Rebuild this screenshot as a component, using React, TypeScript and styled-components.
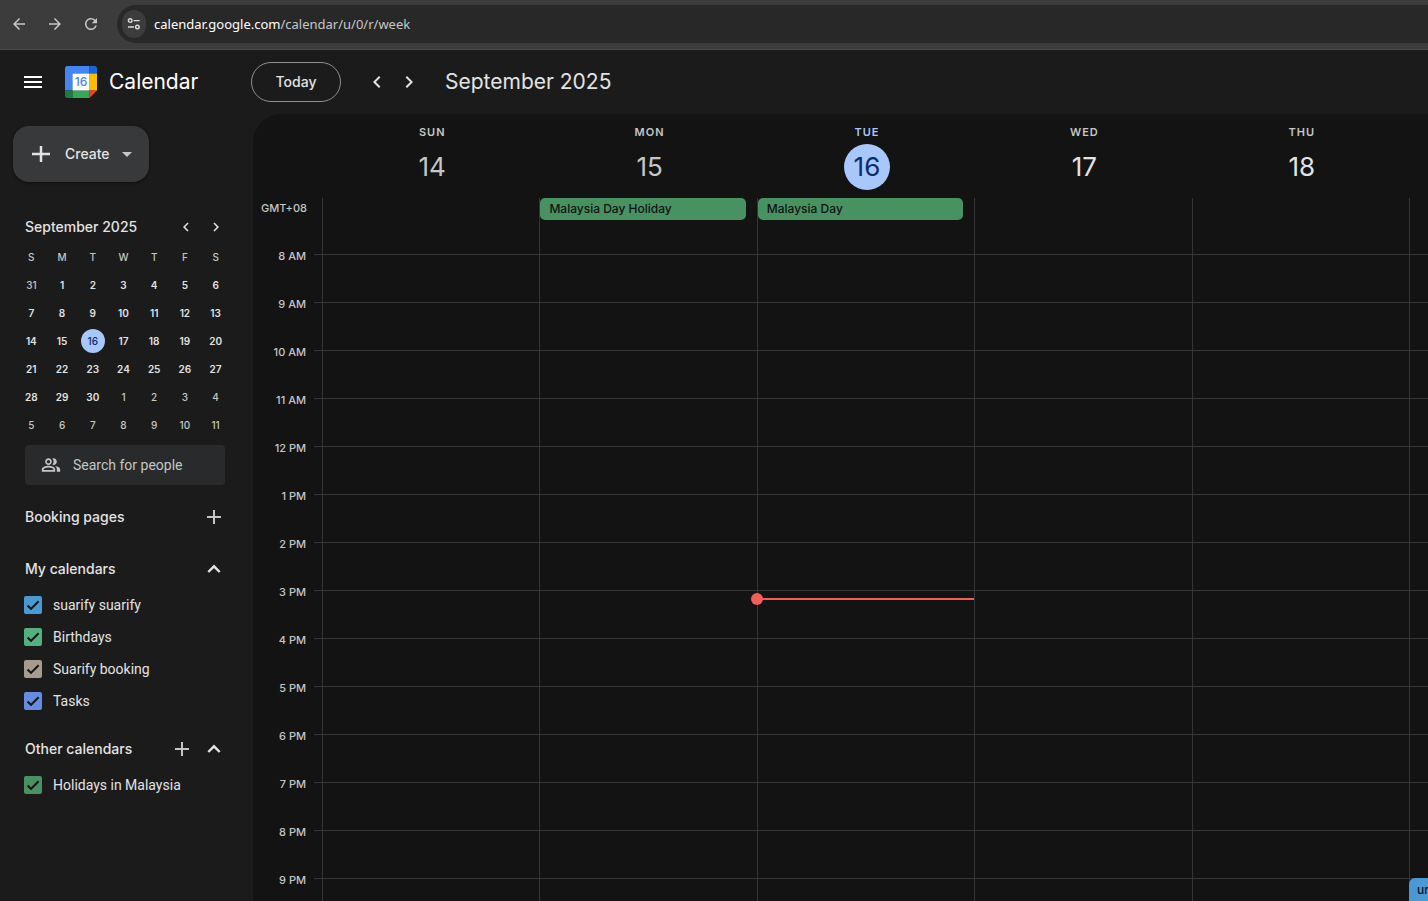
import React from 'react';
import styled, { createGlobalStyle } from 'styled-components';
import {
  MdAdd,
  MdArrowBack,
  MdArrowDropDown,
  MdArrowForward,
  MdChevronLeft,
  MdChevronRight,
  MdMenu,
  MdOutlinePeopleAlt,
  MdRefresh,
} from 'react-icons/md';

const HOUR = 48;
const FIRST_SLOT = 33;

const color = {
  chrome: '#3c3c3c',
  omnibox: '#282828',
  shell: '#1b1b1b',
  surface: '#131314',
  line: '#333537',
  text: '#e3e3e3',
  muted: '#c4c7c5',
  accent: '#a8c7fa',
  onAccent: '#062e6f',
  now: '#f55e57',
};

const GlobalStyle = createGlobalStyle`
  *, *::before, *::after { box-sizing: border-box; }
  body {
    margin: 0;
    background: ${color.shell};
    color: ${color.text};
    font-family: Inter, Roboto, sans-serif;
  }
  button { font-family: inherit; color: inherit; cursor: pointer; }
  svg { display: block; flex: none; }
`;

const Page = styled.div`
  display: flex;
  flex-direction: column;
  height: 100vh;
  overflow: hidden;
`;

/* Browser bar */

const BrowserBar = styled.div`
  display: flex;
  align-items: center;
  flex: none;
  height: 50px;
  padding: 0 0 2px 1px;
  background: ${color.chrome};
  border-bottom: 1px solid #4a4a4a;
`;

const IconButton = styled.button<{ $width?: number; $height?: number }>`
  display: flex;
  align-items: center;
  justify-content: center;
  flex: none;
  width: ${(p) => p.$width ?? 32}px;
  height: ${(p) => p.$height ?? 32}px;
  padding: 0;
  border: 0;
  background: none;
  border-radius: 16px;
`;

const Omnibox = styled.div`
  display: flex;
  align-items: center;
  flex: 1;
  height: 38px;
  margin-left: 8px;
  padding-left: 5px;
  background: ${color.omnibox};
  border-radius: 19px 0 0 19px;
`;

const SiteInfo = styled.button`
  display: flex;
  align-items: center;
  justify-content: center;
  width: 24px;
  height: 28px;
  padding: 0;
  border: 0;
  border-radius: 12px;
  background: #3c3c3c;
`;

const Address = styled.a`
  margin-left: 8px;
  font-family: 'Noto Sans', 'Open Sans', sans-serif;
  font-size: 13px;
  line-height: 20px;
  color: #c7c7c7;
  text-decoration: none;
`;

const Host = styled.span`
  color: #ffffff;
`;

/* Application header */

const Header = styled.header`
  display: flex;
  align-items: center;
  flex: none;
  height: 64px;
  padding-left: 13px;
`;

const Brand = styled.a`
  display: flex;
  align-items: center;
  gap: 12px;
  width: 186px;
  margin-left: 12px;
  font-size: 21px;
  line-height: 28px;
  color: #ffffff;
  text-decoration: none;
`;

const TodayButton = styled.button`
  height: 40px;
  width: 90px;
  margin-right: 20px;
  padding: 0;
  border: 1px solid #8e918f;
  border-radius: 20px;
  background: none;
  font-size: 14px;
  font-weight: 500;
  line-height: 16px;
`;

const PeriodTitle = styled.h1`
  margin: 0 0 0 20px;
  font-size: 21px;
  line-height: 28px;
  font-weight: 400;
`;

/* Sidebar */

const Body = styled.div`
  display: flex;
  flex: 1;
  min-height: 0;
`;

const Sidebar = styled.aside`
  flex: none;
  width: 253px;
  padding: 12px 28px 0 25px;
`;

const CreateButton = styled.button`
  display: flex;
  align-items: center;
  width: 136px;
  height: 56px;
  margin: 0 0 29px -12px;
  padding: 0 10px 0 19px;
  border: 0;
  border-radius: 16px;
  background: #37393b;
  box-shadow: 0 1px 3px rgba(0, 0, 0, 0.5);
  font-size: 14px;
  font-weight: 500;
  line-height: 16px;
`;

const CreateLabel = styled.span`
  flex: 1;
  margin-left: 15px;
  text-align: left;
`;

const MiniHeader = styled.div`
  display: flex;
  align-items: center;
  height: 32px;
  margin-right: -6px;
`;

const SectionTitle = styled.h2`
  flex: 1;
  margin: 0;
  font-size: 14px;
  font-weight: 500;
  line-height: 16px;
`;

const MiniTable = styled.table`
  width: 215px;
  margin: 0 0 6px -9px;
  border-collapse: collapse;
  table-layout: fixed;
  font-size: 10px;
  line-height: 24px;
  text-align: center;
`;

const MiniWeekday = styled.th`
  height: 28px;
  padding: 0;
  color: ${color.muted};
  font-weight: 500;
`;

const MiniCell = styled.td`
  height: 28px;
  padding: 0;
`;

const MiniDay = styled.button<{ $outside: boolean; $today: boolean }>`
  display: block;
  width: 24px;
  height: 24px;
  margin: 0 auto;
  padding: 0;
  border: 0;
  border-radius: 12px;
  background: ${(p) => (p.$today ? color.accent : 'none')};
  color: ${(p) => (p.$today ? color.onAccent : p.$outside ? color.muted : color.text)};
  font-size: 10px;
  font-weight: ${(p) => (p.$outside || p.$today ? 500 : 600)};
`;

const SearchBox = styled.label`
  display: flex;
  align-items: center;
  gap: 12px;
  width: 200px;
  height: 40px;
  padding: 0 16px;
  border-radius: 4px;
  background: #282a2c;
  color: ${color.muted};
`;

const SearchInput = styled.input`
  flex: 1;
  min-width: 0;
  padding: 0;
  border: 0;
  outline: 0;
  background: none;
  color: inherit;
  font: 400 14px Roboto, sans-serif;
  &::placeholder { color: inherit; opacity: 1; }
`;

const ListHeader = styled.div`
  display: flex;
  align-items: center;
  height: 40px;
  margin: 12px -5px 0 0;
`;

const CalendarItem = styled.label`
  display: flex;
  align-items: center;
  gap: 11px;
  height: 32px;
  margin-left: -1px;
  font-family: Roboto, sans-serif;
  font-size: 14px;
  line-height: 16px;
`;

const CheckWrap = styled.span`
  position: relative;
  width: 18px;
  height: 18px;
`;

const CheckInput = styled.input<{ $color: string }>`
  appearance: none;
  display: block;
  width: 18px;
  height: 18px;
  margin: 0;
  border-radius: 2px;
  background: ${(p) => p.$color};
`;

const CheckMark = styled.svg`
  position: absolute;
  inset: 0;
  pointer-events: none;
`;

/* Week view */

const Week = styled.main`
  display: flex;
  flex-direction: column;
  flex: 1;
  min-width: 0;
  overflow: hidden;
  background: ${color.surface};
  border-top-left-radius: 28px;
`;

const WeekRow = styled.div`
  display: flex;
  flex: none;
`;

const Gutter = styled.div`
  flex: none;
  width: 70px;
  color: ${color.muted};
  font-size: 11px;
  font-weight: 500;
  line-height: 16px;
`;

const LinedGutter = styled(Gutter)`
  border-right: 1px solid ${color.line};
`;

const Columns = styled.div`
  display: flex;
  flex: 1;
  min-width: 0;
`;

const Column = styled.div`
  position: relative;
  flex: 0 0 calc((100% - 18px) / 5);
`;

const LinedColumn = styled(Column)`
  border-right: 1px solid ${color.line};
`;

const DayHead = styled(Column)<{ $tone: string }>`
  display: flex;
  flex-direction: column;
  align-items: center;
  height: 84px;
  padding: 10px 0 0 1px;
  color: ${(p) => p.$tone};
`;

const DayName = styled.span<{ $muted: boolean }>`
  color: ${(p) => (p.$muted ? color.muted : 'inherit')};
  font-size: 11px;
  font-weight: 600;
  line-height: 16px;
  letter-spacing: 1px;
`;

const DayNumber = styled.button<{ $today: boolean }>`
  width: 46px;
  height: 46px;
  margin-top: 4px;
  padding: 0;
  border: 0;
  border-radius: 23px;
  background: ${(p) => (p.$today ? color.accent : 'none')};
  color: ${(p) => (p.$today ? color.onAccent : 'inherit')};
  font-size: 26px;
  line-height: 46px;
`;

const AllDayRow = styled(WeekRow)`
  height: 24px;
`;

const ZoneLabel = styled.div`
  padding: 2px 15px 0 0;
  text-align: right;
`;

const AllDayEvent = styled.button`
  display: block;
  width: calc(100% - 11px);
  height: 22px;
  padding: 0 9px;
  border: 0;
  border-radius: 5px;
  background: #489160;
  color: #131314;
  font-size: 12px;
  font-weight: 500;
  line-height: 22px;
  text-align: left;
`;

const TimeRow = styled(WeekRow)`
  flex: 1;
  min-height: 0;
  overflow: hidden;
`;

const HourLabel = styled.div<{ $first: boolean }>`
  display: flex;
  align-items: flex-end;
  justify-content: flex-end;
  gap: 8px;
  height: ${(p) => (p.$first ? FIRST_SLOT : HOUR)}px;
`;

const HourText = styled.span`
  margin-bottom: -9px;
`;

const Tick = styled.span`
  width: 8px;
  height: 1px;
  background: ${color.line};
`;

const HourCell = styled.div<{ $first: boolean }>`
  height: ${(p) => (p.$first ? FIRST_SLOT : HOUR)}px;
  border-bottom: 1px solid ${color.line};
`;

const NowLine = styled.div`
  position: absolute;
  left: 0;
  right: 0;
  height: 2px;
  background: ${color.now};
  &::before {
    content: '';
    position: absolute;
    left: -7px;
    top: -5px;
    width: 12px;
    height: 12px;
    border-radius: 6px;
    background: ${color.now};
  }
`;

const TimedEvent = styled.button`
  position: absolute;
  left: -1px;
  display: flex;
  flex-direction: column;
  width: calc(100% - 10px);
  height: 47px;
  padding: 4px 8px;
  border: 0;
  border-radius: 6px;
  background: #4a99d3;
  color: #131314;
  font-size: 12px;
  font-weight: 500;
  line-height: 16px;
  text-align: left;
`;

const EventLine = styled.span`
  display: block;
`;

const days = [
  { name: 'SUN', date: 14, past: true },
  { name: 'MON', date: 15, past: true, allDay: 'Malaysia Day Holiday' },
  { name: 'TUE', date: 16, today: true, allDay: 'Malaysia Day', now: 7 + 10 / 60 },
  { name: 'WED', date: 17 },
  { name: 'THU', date: 18 },
  { name: 'FRI', date: 19, event: { title: 'untitled', time: '9 – 10pm', hour: 13 } },
];

const headedDays = days.slice(0, 5);

const hours = [
  '8 AM', '9 AM', '10 AM', '11 AM', '12 PM', '1 PM', '2 PM',
  '3 PM', '4 PM', '5 PM', '6 PM', '7 PM', '8 PM', '9 PM',
];

const weekdays = ['S', 'M', 'T', 'W', 'T', 'F', 'S'];

const miniWeeks = Array.from({ length: 6 }, (_, week) =>
  Array.from({ length: 7 }, (_, day) => {
    const n = week * 7 + day;
    if (n === 0) return { label: 31, outside: true };
    return n > 30 ? { label: n - 30, outside: true } : { label: n, outside: false };
  }),
);

const myCalendars = [
  { name: 'suarify suarify', color: '#4a99d3' },
  { name: 'Birthdays', color: '#55b080' },
  { name: 'Suarify booking', color: '#a79b8e' },
  { name: 'Tasks', color: '#668ce1' },
];

const otherCalendars = [{ name: 'Holidays in Malaysia', color: '#489160' }];

const offsetOf = (hour: number) => Math.round(FIRST_SLOT - 1 + hour * HOUR);

const toneOf = (day: { past?: boolean; today?: boolean }) =>
  day.today ? color.accent : day.past ? color.muted : color.text;

function TuneIcon() {
  return (
    <svg width="14" height="14" viewBox="0 0 14 14" fill="none" stroke="#dcdcdc" strokeWidth="1.4">
      <circle cx="3.2" cy="3.6" r="1.8" />
      <path d="M6.6 3.6H12.6M1 10H7" />
      <circle cx="10.4" cy="10" r="1.8" />
    </svg>
  );
}

function CollapseIcon() {
  return (
    <svg width="24" height="24" viewBox="0 0 24 24" fill="none" stroke="#e3e3e3" strokeWidth="2.4">
      <path d="M6.3 15L12 9.300L17.700 15" />
    </svg>
  );
}

function Logo() {
  return (
    <svg width="32" height="32" viewBox="0 0 32 32" role="img" aria-label="Calendar logo">
      <path d="M2.5 0H24.5V7.5H7.5V24.5H0V2.5A2.5 2.5 0 0 1 2.5 0Z" fill="#4285f4" />
      <path d="M24.5 0H29.5A2.5 2.5 0 0 1 32 2.5V7.5H24.5Z" fill="#1967d2" />
      <path d="M24.5 7.5H32V24.5H24.5Z" fill="#fbbc04" />
      <path d="M0 24.5H7.5V32H2.5A2.5 2.5 0 0 1 0 29.5Z" fill="#188038" />
      <path d="M7.5 24.5H24.5V32H7.5Z" fill="#34a853" />
      <path d="M24.5 24.5H32L24.5 32Z" fill="#ea4335" />
      <path d="M7.5 7.5H24.5V24.5H7.5Z" fill="#fff" />
      <text x="16" y="20" textAnchor="middle" fontFamily="Inter, sans-serif" fontSize="12" fontWeight="500" fill="#4285f4">
        16
      </text>
    </svg>
  );
}

function CalendarCheck({ name, tint }: { name: string; tint: string }) {
  return (
    <CalendarItem>
      <CheckWrap>
        <CheckInput type="checkbox" defaultChecked $color={tint} />
        <CheckMark viewBox="0 0 18 18" fill="none" stroke="#131314" strokeWidth="2">
          <path d="M3.600 9.500L7 12.900L14.600 5.300" />
        </CheckMark>
      </CheckWrap>
      {name}
    </CalendarItem>
  );
}

export default function App() {
  return (
    <Page>
      <GlobalStyle />
      <BrowserBar>
        <IconButton $width={36} aria-label="Back"><MdArrowBack size={18} color="#c7c7c7" /></IconButton>
        <IconButton $width={36} aria-label="Forward"><MdArrowForward size={18} color="#c7c7c7" /></IconButton>
        <IconButton $width={36} aria-label="Reload"><MdRefresh size={18} color="#c7c7c7" /></IconButton>
        <Omnibox>
          <SiteInfo aria-label="Site information"><TuneIcon /></SiteInfo>
          <Address href="#"><Host>calendar.google.com</Host>/calendar/u/0/r/week</Address>
        </Omnibox>
      </BrowserBar>

      <Header>
        <IconButton $width={40} $height={40} aria-label="Main menu"><MdMenu size={24} color="#fff" /></IconButton>
        <Brand href="#"><Logo />Calendar</Brand>
        <TodayButton>Today</TodayButton>
        <IconButton aria-label="Previous week"><MdChevronLeft size={24} /></IconButton>
        <IconButton aria-label="Next week"><MdChevronRight size={24} /></IconButton>
        <PeriodTitle>September 2025</PeriodTitle>
      </Header>

      <Body>
        <Sidebar>
          <CreateButton>
            <svg width="18" height="18" viewBox="0 0 18 18" stroke="#e3e3e3" strokeWidth="2.5" fill="none">
              <path d="M0 9H18M9 1V17" />
            </svg>
            <CreateLabel>Create</CreateLabel>
            <MdArrowDropDown size={24} color={color.muted} />
          </CreateButton>

          <MiniHeader>
            <SectionTitle>September 2025</SectionTitle>
            <IconButton $width={30} aria-label="Previous month"><MdChevronLeft size={18} /></IconButton>
            <IconButton $width={30} aria-label="Next month"><MdChevronRight size={18} /></IconButton>
          </MiniHeader>
          <MiniTable>
            <thead>
              <tr>{weekdays.map((d, i) => <MiniWeekday key={i}>{d}</MiniWeekday>)}</tr>
            </thead>
            <tbody>
              {miniWeeks.map((week, i) => (
                <tr key={i}>
                  {week.map((d, j) => (
                    <MiniCell key={j}>
                      <MiniDay $outside={d.outside} $today={d.label === 16}>{d.label}</MiniDay>
                    </MiniCell>
                  ))}
                </tr>
              ))}
            </tbody>
          </MiniTable>

          <SearchBox>
            <MdOutlinePeopleAlt size={20} />
            <SearchInput type="text" placeholder="Search for people" aria-label="Search for people" />
          </SearchBox>

          <ListHeader>
            <SectionTitle>Booking pages</SectionTitle>
            <IconButton aria-label="Create booking page"><MdAdd size={24} color={color.muted} /></IconButton>
          </ListHeader>
          <ListHeader>
            <SectionTitle>My calendars</SectionTitle>
            <IconButton aria-label="Collapse my calendars"><CollapseIcon /></IconButton>
          </ListHeader>
          {myCalendars.map((c) => <CalendarCheck key={c.name} name={c.name} tint={c.color} />)}
          <ListHeader>
            <SectionTitle>Other calendars</SectionTitle>
            <IconButton aria-label="Add other calendars"><MdAdd size={24} color={color.muted} /></IconButton>
            <IconButton aria-label="Collapse other calendars"><CollapseIcon /></IconButton>
          </ListHeader>
          {otherCalendars.map((c) => <CalendarCheck key={c.name} name={c.name} tint={c.color} />)}
        </Sidebar>

        <Week>
          <WeekRow>
            <Gutter />
            <Columns>
              {headedDays.map((d) => (
                <DayHead key={d.name} $tone={toneOf(d)}>
                  <DayName $muted={!d.today}>{d.name}</DayName>
                  <DayNumber $today={!!d.today}>{d.date}</DayNumber>
                </DayHead>
              ))}
            </Columns>
          </WeekRow>
          <AllDayRow>
            <LinedGutter><ZoneLabel>GMT+08</ZoneLabel></LinedGutter>
            <Columns>
              {days.map((d) => (
                <LinedColumn key={d.name}>
                  {d.allDay && <AllDayEvent>{d.allDay}</AllDayEvent>}
                </LinedColumn>
              ))}
            </Columns>
          </AllDayRow>
          <TimeRow>
            <LinedGutter>
              {hours.map((h, i) => (
                <HourLabel key={h} $first={i === 0}><HourText>{h}</HourText><Tick /></HourLabel>
              ))}
            </LinedGutter>
            <Columns>
              {days.map((d) => (
                <LinedColumn key={d.name}>
                  {hours.map((h, i) => <HourCell key={h} $first={i === 0} />)}
                  {d.now && <NowLine style={{ top: offsetOf(d.now) }} />}
                  {d.event && (
                    <TimedEvent style={{ top: offsetOf(d.event.hour) }}>
                      <EventLine>{d.event.title}</EventLine>
                      <EventLine>{d.event.time}</EventLine>
                    </TimedEvent>
                  )}
                </LinedColumn>
              ))}
            </Columns>
          </TimeRow>
        </Week>
      </Body>
    </Page>
  );
}
